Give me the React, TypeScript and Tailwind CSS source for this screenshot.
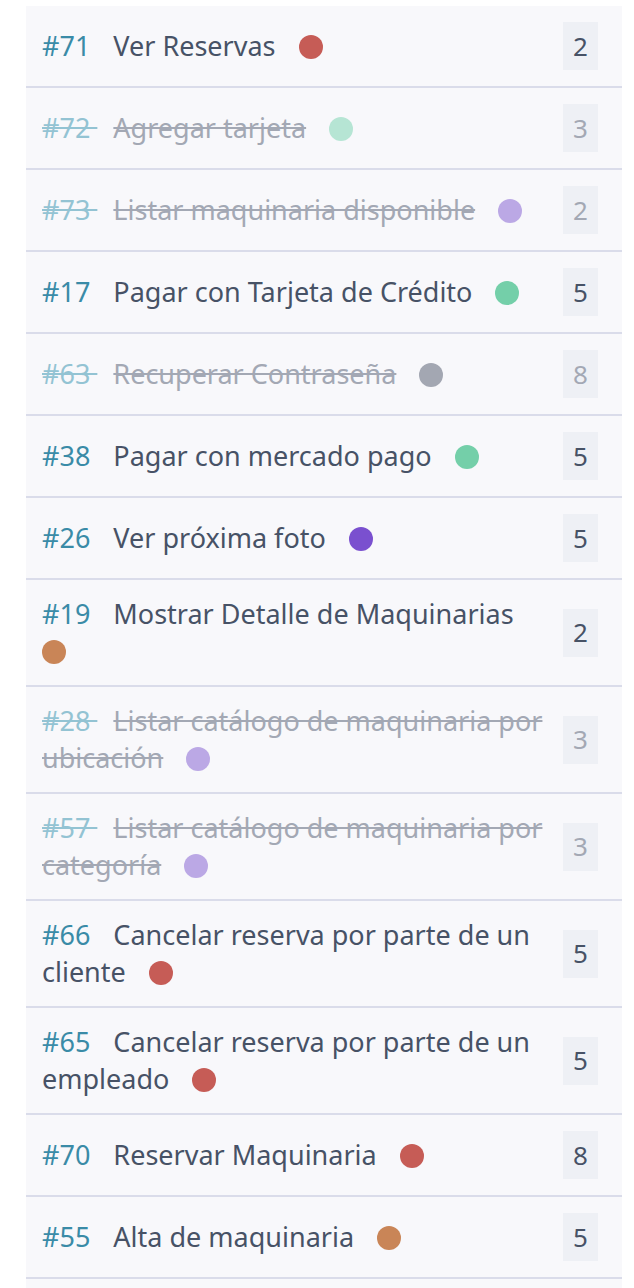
import React from 'react';

type Story = {
  id: number;
  title: string;
  dot: string;
  points: number;
  done?: boolean;
};

const stories: Story[] = [
  { id: 71, title: 'Ver Reservas', dot: 'bg-[#c65c56]', points: 2 },
  { id: 72, title: 'Agregar tarjeta', dot: 'bg-[#b6e5d4]', points: 3, done: true },
  { id: 73, title: 'Listar maquinaria disponible', dot: 'bg-[#bba8e5]', points: 2, done: true },
  { id: 17, title: 'Pagar con Tarjeta de Crédito', dot: 'bg-[#74cfa9]', points: 5 },
  { id: 63, title: 'Recuperar Contraseña', dot: 'bg-[#a3a7b2]', points: 8, done: true },
  { id: 38, title: 'Pagar con mercado pago', dot: 'bg-[#74cfa9]', points: 5 },
  { id: 26, title: 'Ver próxima foto', dot: 'bg-[#7a50cf]', points: 5 },
  { id: 19, title: 'Mostrar Detalle de Maquinarias', dot: 'bg-[#c98557]', points: 2 },
  { id: 28, title: 'Listar catálogo de maquinaria por ubicación', dot: 'bg-[#bba8e5]', points: 3, done: true },
  { id: 57, title: 'Listar catálogo de maquinaria por categoría', dot: 'bg-[#bba8e5]', points: 3, done: true },
  { id: 66, title: 'Cancelar reserva por parte de un cliente', dot: 'bg-[#c65c56]', points: 5 },
  { id: 65, title: 'Cancelar reserva por parte de un empleado', dot: 'bg-[#c65c56]', points: 5 },
  { id: 70, title: 'Reservar Maquinaria', dot: 'bg-[#c65c56]', points: 8 },
  { id: 55, title: 'Alta de maquinaria', dot: 'bg-[#c98557]', points: 5 },
];

const StoryRow: React.FC<{ story: Story }> = ({ story }) => (
  <div className="flex items-center justify-between border-b-2 border-[#dadcea] py-4 pl-4 pr-6">
    <div className="w-[507px] text-[27px] leading-[36.5px]">
      <span
        className={
          story.done
            ? 'mr-[16px] text-[#93c3d3] line-through'
            : 'mr-[16px] text-[#3a8ba7]'
        }
      >
        {`#${story.id} `}
      </span>{' '}
      <span
        className={
          story.done
            ? 'mr-[16px] text-[#a3a8b4] line-through'
            : 'mr-[16px] text-[#475266]'
        }
      >
        {story.title}
      </span>{' '}
      <span className={`inline-block h-6 w-6 rounded-full align-[-3px] ${story.dot}`} />
    </div>
    <div
      className={
        story.done
          ? 'flex h-12 w-[35px] items-center justify-center bg-[#eef0f5] text-[26px] text-[#a3a8b4]'
          : 'flex h-12 w-[35px] items-center justify-center bg-[#eef0f5] text-[26px] text-[#475266]'
      }
    >
      {story.points}
    </div>
  </div>
);

export default function App() {
  return (
    <div
      className="min-h-screen bg-white pt-[6px] pl-[26px] pr-3"
      style={{ fontFamily: '"Noto Sans", "Open Sans", sans-serif' }}
    >
      <div className="w-[596px] bg-[#f8f8fb]">
        {stories.map((s) => (
          <StoryRow key={s.id} story={s} />
        ))}
        <div className="h-10" />
      </div>
    </div>
  );
}
